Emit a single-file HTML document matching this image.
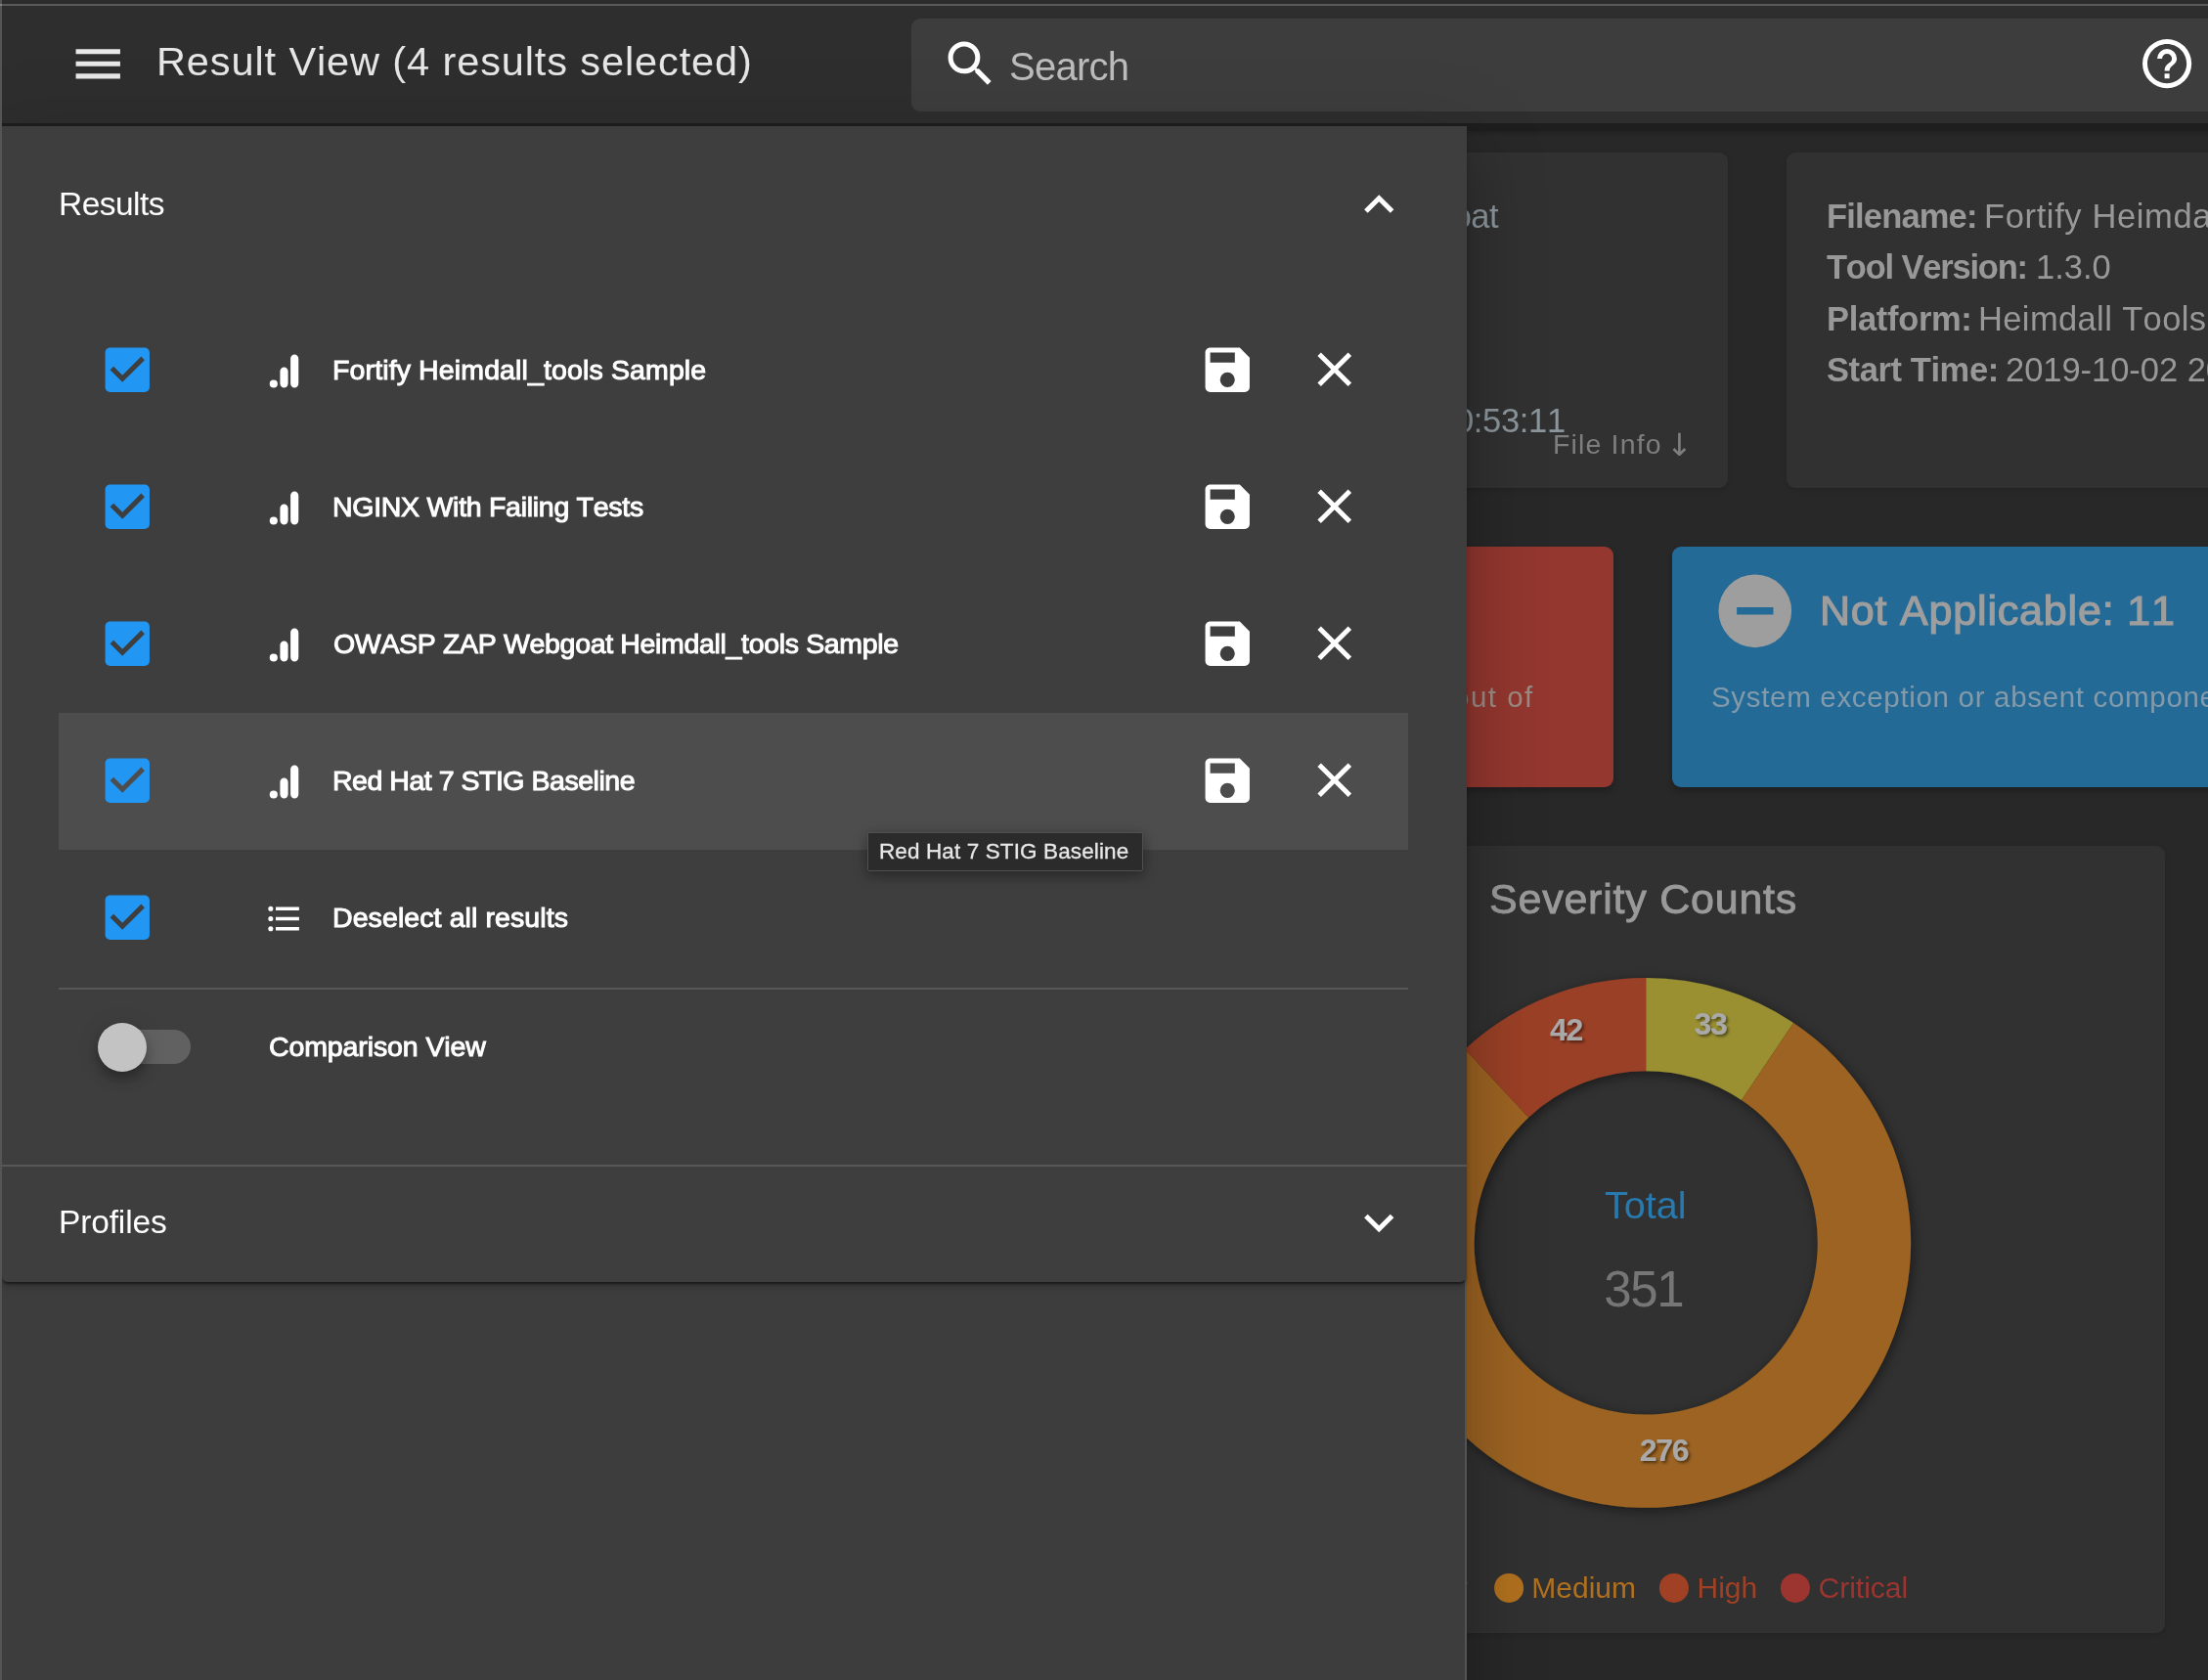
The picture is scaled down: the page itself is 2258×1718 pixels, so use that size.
<!DOCTYPE html>
<html lang="en"><head><meta charset="utf-8"><title>Result View</title>
<style>
html,body{margin:0;padding:0;background:#282828;}
body{width:2258px;height:1718px;overflow:hidden;position:relative;font-family:"Liberation Sans",sans-serif;}
.a{position:absolute;}
.t{position:absolute;white-space:nowrap;line-height:1;font-kerning:none;will-change:transform;}
.ic{position:absolute;display:block;}
</style></head>
<body>
<div class="a" style="left:1300px;top:156px;width:467px;height:343px;background:#313131;border-radius:9px;box-shadow:0 2px 5px rgba(0,0,0,.12);"></div>
<div class="a" style="left:1827px;top:156px;width:500px;height:343px;background:#313131;border-radius:9px;box-shadow:0 2px 5px rgba(0,0,0,.12);"></div>
<span class="t " style="top:203.80px;font-size:34.5px;color:#8b969c;left:1398.25px;letter-spacing:-0.6px;">Webgoat</span>
<span class="t " style="top:413.30px;font-size:34.5px;color:#8b969c;left:1469.47px;letter-spacing:-0.3px;">20:53:11</span>
<span class="t " style="top:439.67px;font-size:28.5px;color:#7e7e7e;left:1588.15px;letter-spacing:1.15px;">File Info</span>
<span class="t" style="left:1703.5px;top:438.7px;font-size:32px;color:#7e7e7e;font-family:'DejaVu Sans',sans-serif;">↓</span>
<span class="t " style="top:203.70px;font-size:34.5px;color:#989898;left:1867.55px;font-weight:700;letter-spacing:-0.822px;">Filename:</span>
<span class="t " style="top:203.70px;font-size:34.5px;color:#989898;left:2029.25px;letter-spacing:0.625px;">Fortify Heimdall_tools Sample</span>
<span class="t " style="top:256.40px;font-size:34.5px;color:#989898;left:1868.12px;font-weight:700;letter-spacing:-1.202px;">Tool Version:</span>
<span class="t " style="top:256.40px;font-size:34.5px;color:#989898;left:2082.07px;">1.3.0</span>
<span class="t " style="top:308.70px;font-size:34.5px;color:#989898;left:1867.55px;font-weight:700;letter-spacing:-0.325px;">Platform:</span>
<span class="t " style="top:308.70px;font-size:34.5px;color:#989898;left:2022.75px;letter-spacing:0.371px;">Heimdall Tools</span>
<span class="t " style="top:361.40px;font-size:34.5px;color:#989898;left:1867.62px;font-weight:700;letter-spacing:-0.405px;">Start Time:</span>
<span class="t " style="top:361.40px;font-size:34.5px;color:#989898;left:2051.07px;letter-spacing:-0.036px;">2019-10-02 20:53:11</span>
<div class="a" style="left:1300px;top:559px;width:350px;height:246px;background:#93372f;border-radius:9px;box-shadow:0 4px 6px rgba(0,0,0,.25);"></div>
<div class="a" style="left:1710px;top:559px;width:600px;height:246px;background:#246a96;border-radius:9px;box-shadow:0 4px 6px rgba(0,0,0,.25);"></div>
<span class="t " style="top:697.63px;font-size:29.5px;color:#9b8b85;left:1485.92px;letter-spacing:1.5px;">out of</span>
<svg class="ic" style="left:1750.20px;top:579.50px;" width="89.6" height="89.6" viewBox="0 0 24 24"><path fill="#9e9e9e" d="M17,13H7V11H17M12,2A10,10 0 0,0 2,12A10,10 0 0,0 12,22A10,10 0 0,0 22,12A10,10 0 0,0 12,2Z"/></svg>
<span class="t " style="top:602.80px;font-size:43px;color:#9e9e9e;left:1860.90px;letter-spacing:0.812px;-webkit-text-stroke:1.2px #9e9e9e;">Not Applicable: 11</span>
<span class="t " style="top:697.63px;font-size:29.5px;color:#839aab;left:1749.75px;letter-spacing:0.68px;">System exception or absent component</span>
<div class="a" style="left:1300px;top:865px;width:914px;height:805px;background:#313131;border-radius:9px;box-shadow:0 2px 5px rgba(0,0,0,.12);"></div>
<span class="t " style="top:898.20px;font-size:43px;color:#9a9a9a;left:1522.58px;letter-spacing:0.771px;-webkit-text-stroke:0.9px #9a9a9a;">Severity Counts</span>
<svg class="a" style="left:0;top:0;" width="2258" height="1718" viewBox="0 0 2258 1718">
<defs><filter id="ds" x="-20%" y="-20%" width="140%" height="140%"><feDropShadow dx="2" dy="3" stdDeviation="6" flood-color="#000" flood-opacity="0.45"/></filter><filter id="ts" x="-30%" y="-30%" width="160%" height="160%"><feDropShadow dx="2" dy="2" stdDeviation="1.5" flood-color="#000" flood-opacity="0.5"/></filter></defs>
<g filter="url(#ds)">
<path fill="#9a9033" d="M1683.20,1000.00 A270.9,270.9 0 0 1 1834.08,1045.91 L1781.00,1125.06 A175.6,175.6 0 0 0 1683.20,1095.30 Z"/>
<path fill="#9c6320" d="M1834.08,1045.91 A270.9,270.9 0 1 1 1498.18,1073.02 L1563.27,1142.64 A175.6,175.6 0 1 0 1781.00,1125.06 Z"/>
<path fill="#9a4026" d="M1498.18,1073.02 A270.9,270.9 0 0 1 1683.20,1000.00 L1683.20,1095.30 A175.6,175.6 0 0 0 1563.27,1142.64 Z"/>
</g>
<g font-family="Liberation Sans, sans-serif" font-weight="700" font-size="32" letter-spacing="-1.3" fill="#a9a9a9" text-anchor="middle" filter="url(#ts)"><text x="1601.4" y="1063.6">42</text><text x="1749" y="1057.6">33</text><text x="1701.6" y="1494.3">276</text></g>
<text font-family="Liberation Sans, sans-serif" font-size="39.5" fill="#2779ae" text-anchor="middle" x="1682.8" y="1246.1">Total</text>
<text font-family="Liberation Sans, sans-serif" font-size="51" letter-spacing="-1.4" fill="#767676" text-anchor="middle" x="1680.8" y="1336.3">351</text>
<circle cx="1432" cy="1623.9" r="15" fill="#9a9033"/>
<text font-family="Liberation Sans, sans-serif" font-size="30" fill="#9a9033" x="1445.5" y="1634">Low</text>
<circle cx="1543.1" cy="1623.9" r="15" fill="#b0701e"/>
<text font-family="Liberation Sans, sans-serif" font-size="30" fill="#b0701e" x="1566.3" y="1634">Medium</text>
<circle cx="1711.9" cy="1623.9" r="15" fill="#a04024"/>
<text font-family="Liberation Sans, sans-serif" font-size="30" fill="#a04024" x="1735.5" y="1634">High</text>
<circle cx="1835.9" cy="1623.9" r="15" fill="#9c3530"/>
<text font-family="Liberation Sans, sans-serif" font-size="30" fill="#9c3530" x="1859.5" y="1634">Critical</text>
</svg>
<div class="a" style="left:0;top:126px;width:2258px;height:8px;background:#1e1e1e;"></div>
<div class="a" style="left:0;top:134px;width:2258px;height:6px;background:linear-gradient(#212121,#282828);"></div>
<div class="a" style="left:0;top:0;width:2258px;height:126px;background:#2e2e2e;"></div>
<div class="a" style="left:932px;top:19px;width:1400px;height:95px;background:#3d3d3d;border-radius:9px;"></div>
<svg class="ic" style="left:69.70px;top:35.20px;" width="60.5" height="60.5" viewBox="0 0 24 24"><path fill="#e8e8e8" d="M3,6H21V8H3V6M3,11H21V13H3V11M3,16H21V18H3V16Z"/></svg>
<span class="t " style="top:42.27px;font-size:41.5px;color:#e6e6e6;left:159.82px;letter-spacing:0.892px;">Result View (4 results selected)</span>
<svg class="ic" style="left:962.00px;top:35.20px;" width="60.5" height="60.5" viewBox="0 0 24 24"><path fill="#ffffff" d="M9.5,3A6.5,6.5 0 0,1 16,9.5C16,11.11 15.41,12.59 14.44,13.73L14.71,14H15.5L20.5,19L19,20.5L14,15.5V14.71L13.73,14.44C12.59,15.41 11.11,16 9.5,16A6.5,6.5 0 0,1 3,9.5A6.5,6.5 0 0,1 9.5,3M9.5,5C7,5 5,7 5,9.5C5,12 7,14 9.5,14C12,14 14,12 14,9.5C14,7 12,5 9.5,5Z"/></svg>
<span class="t " style="top:48.34px;font-size:40px;color:#bcbcbc;left:1032.05px;letter-spacing:-0.74px;">Search</span>
<svg class="ic" style="left:2186.20px;top:35.20px;" width="60.2" height="60.2" viewBox="0 0 24 24"><path fill="#ffffff" d="M11,18H13V16H11V18M12,2A10,10 0 0,0 2,12A10,10 0 0,0 12,22A10,10 0 0,0 22,12A10,10 0 0,0 12,2M12,20C7.59,20 4,16.41 4,12C4,7.59 7.59,4 12,4C16.41,4 20,7.59 20,12C20,16.41 16.41,20 12,20M12,6A4,4 0 0,0 8,10H10A2,2 0 0,1 12,8A2,2 0 0,1 14,10C14,12 11,11.75 11,15H13C13,12.75 16,12.5 16,10A4,4 0 0,0 12,6Z"/></svg>
<div class="a" style="left:0;top:129px;width:1500px;height:1700px;background:#3d3d3d;box-shadow:0 20px 25px -12px rgba(0,0,0,.2),0 40px 60px 5px rgba(0,0,0,.14),0 15px 75px 12px rgba(0,0,0,.12);"></div>
<div class="a" style="left:1497.5px;top:129px;width:2.5px;height:1600px;background:#525456;"></div>
<div class="a" style="left:2px;top:129px;width:1498px;height:1182px;background:#3e3e3e;border-radius:0 0 7px 6px;box-shadow:0 3px 2px -1px rgba(0,0,0,.45),0 5px 6px rgba(0,0,0,.18);"></div>
<span class="t " style="top:191.64px;font-size:33.5px;color:#ffffff;left:59.67px;letter-spacing:-0.55px;">Results</span>
<svg class="ic" style="left:1379.75px;top:179.20px;" width="60.5" height="60.5" viewBox="0 0 24 24"><path fill="#ffffff" d="M7.41,15.41L12,10.83L16.59,15.41L18,14L12,8L6,14L7.41,15.41Z"/></svg>
<div class="a" style="left:60px;top:729px;width:1380px;height:140px;background:#4d4d4d;"></div>
<svg class="ic" style="left:99.80px;top:348.10px;" width="60.5" height="60.5" viewBox="0 0 24 24"><path fill="#2196f3" d="M10,17L5,12L6.41,10.58L10,14.17L17.59,6.58L19,8M19,3H5C3.89,3 3,3.89 3,5V19A2,2 0 0,0 5,21H19A2,2 0 0,0 21,19V5C21,3.89 20.1,3 19,3Z"/></svg>
<svg class="ic" style="left:269.75px;top:358.50px;" width="41" height="41" viewBox="0 0 24 24"><path fill="#ffffff" d="M15.86,4.39V19.39C15.86,21.06 17,22 18.25,22C19.39,22 20.64,21.21 20.64,19.39V4.5C20.64,2.96 19.5,2 18.25,2C17,2 15.86,3.06 15.86,4.39M9.61,12V19.39C9.61,21.07 10.77,22 12,22C13.14,22 14.39,21.21 14.39,19.39V12.11C14.39,10.57 13.25,9.61 12,9.61C10.75,9.61 9.61,10.67 9.61,12M5.75,17.23A2.39,2.39 0 0,1 8.14,19.61A2.39,2.39 0 0,1 5.75,22A2.39,2.39 0 0,1 3.36,19.61A2.39,2.39 0 0,1 5.75,17.23Z"/></svg>
<span class="t " style="top:363.87px;font-size:28.5px;color:#ffffff;left:339.85px;letter-spacing:0.129px;-webkit-text-stroke:1.0px #ffffff;">Fortify Heimdall_tools Sample</span>
<svg class="ic" style="left:1224.80px;top:348.10px;" width="60.5" height="60.5" viewBox="0 0 24 24"><path fill="#ffffff" d="M15,9H5V5H15M12,19A3,3 0 0,1 9,16A3,3 0 0,1 12,13A3,3 0 0,1 15,16A3,3 0 0,1 12,19M17,3H5C3.89,3 3,3.9 3,5V19A2,2 0 0,0 5,21H19A2,2 0 0,0 21,19V7L17,3Z"/></svg>
<svg class="ic" style="left:1335.20px;top:348.40px;" width="59.5" height="59.5" viewBox="0 0 24 24"><path fill="#ffffff" d="M19,6.41L17.59,5L12,10.59L6.41,5L5,6.41L10.59,12L5,17.59L6.41,19L12,13.41L17.59,19L19,17.59L13.41,12L19,6.41Z"/></svg>
<svg class="ic" style="left:99.80px;top:488.10px;" width="60.5" height="60.5" viewBox="0 0 24 24"><path fill="#2196f3" d="M10,17L5,12L6.41,10.58L10,14.17L17.59,6.58L19,8M19,3H5C3.89,3 3,3.89 3,5V19A2,2 0 0,0 5,21H19A2,2 0 0,0 21,19V5C21,3.89 20.1,3 19,3Z"/></svg>
<svg class="ic" style="left:269.75px;top:498.50px;" width="41" height="41" viewBox="0 0 24 24"><path fill="#ffffff" d="M15.86,4.39V19.39C15.86,21.06 17,22 18.25,22C19.39,22 20.64,21.21 20.64,19.39V4.5C20.64,2.96 19.5,2 18.25,2C17,2 15.86,3.06 15.86,4.39M9.61,12V19.39C9.61,21.07 10.77,22 12,22C13.14,22 14.39,21.21 14.39,19.39V12.11C14.39,10.57 13.25,9.61 12,9.61C10.75,9.61 9.61,10.67 9.61,12M5.75,17.23A2.39,2.39 0 0,1 8.14,19.61A2.39,2.39 0 0,1 5.75,22A2.39,2.39 0 0,1 3.36,19.61A2.39,2.39 0 0,1 5.75,17.23Z"/></svg>
<span class="t " style="top:503.87px;font-size:28.5px;color:#ffffff;left:339.85px;letter-spacing:-0.282px;-webkit-text-stroke:1.0px #ffffff;">NGINX With Failing Tests</span>
<svg class="ic" style="left:1224.80px;top:488.10px;" width="60.5" height="60.5" viewBox="0 0 24 24"><path fill="#ffffff" d="M15,9H5V5H15M12,19A3,3 0 0,1 9,16A3,3 0 0,1 12,13A3,3 0 0,1 15,16A3,3 0 0,1 12,19M17,3H5C3.89,3 3,3.9 3,5V19A2,2 0 0,0 5,21H19A2,2 0 0,0 21,19V7L17,3Z"/></svg>
<svg class="ic" style="left:1335.20px;top:488.40px;" width="59.5" height="59.5" viewBox="0 0 24 24"><path fill="#ffffff" d="M19,6.41L17.59,5L12,10.59L6.41,5L5,6.41L10.59,12L5,17.59L6.41,19L12,13.41L17.59,19L19,17.59L13.41,12L19,6.41Z"/></svg>
<svg class="ic" style="left:99.80px;top:628.10px;" width="60.5" height="60.5" viewBox="0 0 24 24"><path fill="#2196f3" d="M10,17L5,12L6.41,10.58L10,14.17L17.59,6.58L19,8M19,3H5C3.89,3 3,3.89 3,5V19A2,2 0 0,0 5,21H19A2,2 0 0,0 21,19V5C21,3.89 20.1,3 19,3Z"/></svg>
<svg class="ic" style="left:269.75px;top:638.50px;" width="41" height="41" viewBox="0 0 24 24"><path fill="#ffffff" d="M15.86,4.39V19.39C15.86,21.06 17,22 18.25,22C19.39,22 20.64,21.21 20.64,19.39V4.5C20.64,2.96 19.5,2 18.25,2C17,2 15.86,3.06 15.86,4.39M9.61,12V19.39C9.61,21.07 10.77,22 12,22C13.14,22 14.39,21.21 14.39,19.39V12.11C14.39,10.57 13.25,9.61 12,9.61C10.75,9.61 9.61,10.67 9.61,12M5.75,17.23A2.39,2.39 0 0,1 8.14,19.61A2.39,2.39 0 0,1 5.75,22A2.39,2.39 0 0,1 3.36,19.61A2.39,2.39 0 0,1 5.75,17.23Z"/></svg>
<span class="t " style="top:643.87px;font-size:28.5px;color:#ffffff;left:340.85px;letter-spacing:-0.334px;-webkit-text-stroke:1.0px #ffffff;">OWASP ZAP Webgoat Heimdall_tools Sample</span>
<svg class="ic" style="left:1224.80px;top:628.10px;" width="60.5" height="60.5" viewBox="0 0 24 24"><path fill="#ffffff" d="M15,9H5V5H15M12,19A3,3 0 0,1 9,16A3,3 0 0,1 12,13A3,3 0 0,1 15,16A3,3 0 0,1 12,19M17,3H5C3.89,3 3,3.9 3,5V19A2,2 0 0,0 5,21H19A2,2 0 0,0 21,19V7L17,3Z"/></svg>
<svg class="ic" style="left:1335.20px;top:628.40px;" width="59.5" height="59.5" viewBox="0 0 24 24"><path fill="#ffffff" d="M19,6.41L17.59,5L12,10.59L6.41,5L5,6.41L10.59,12L5,17.59L6.41,19L12,13.41L17.59,19L19,17.59L13.41,12L19,6.41Z"/></svg>
<svg class="ic" style="left:99.80px;top:768.10px;" width="60.5" height="60.5" viewBox="0 0 24 24"><path fill="#2196f3" d="M10,17L5,12L6.41,10.58L10,14.17L17.59,6.58L19,8M19,3H5C3.89,3 3,3.89 3,5V19A2,2 0 0,0 5,21H19A2,2 0 0,0 21,19V5C21,3.89 20.1,3 19,3Z"/></svg>
<svg class="ic" style="left:269.75px;top:778.50px;" width="41" height="41" viewBox="0 0 24 24"><path fill="#ffffff" d="M15.86,4.39V19.39C15.86,21.06 17,22 18.25,22C19.39,22 20.64,21.21 20.64,19.39V4.5C20.64,2.96 19.5,2 18.25,2C17,2 15.86,3.06 15.86,4.39M9.61,12V19.39C9.61,21.07 10.77,22 12,22C13.14,22 14.39,21.21 14.39,19.39V12.11C14.39,10.57 13.25,9.61 12,9.61C10.75,9.61 9.61,10.67 9.61,12M5.75,17.23A2.39,2.39 0 0,1 8.14,19.61A2.39,2.39 0 0,1 5.75,22A2.39,2.39 0 0,1 3.36,19.61A2.39,2.39 0 0,1 5.75,17.23Z"/></svg>
<span class="t " style="top:783.87px;font-size:28.5px;color:#ffffff;left:339.85px;letter-spacing:-0.477px;-webkit-text-stroke:1.0px #ffffff;">Red Hat 7 STIG Baseline</span>
<svg class="ic" style="left:1224.80px;top:768.10px;" width="60.5" height="60.5" viewBox="0 0 24 24"><path fill="#ffffff" d="M15,9H5V5H15M12,19A3,3 0 0,1 9,16A3,3 0 0,1 12,13A3,3 0 0,1 15,16A3,3 0 0,1 12,19M17,3H5C3.89,3 3,3.9 3,5V19A2,2 0 0,0 5,21H19A2,2 0 0,0 21,19V7L17,3Z"/></svg>
<svg class="ic" style="left:1335.20px;top:768.40px;" width="59.5" height="59.5" viewBox="0 0 24 24"><path fill="#ffffff" d="M19,6.41L17.59,5L12,10.59L6.41,5L5,6.41L10.59,12L5,17.59L6.41,19L12,13.41L17.59,19L19,17.59L13.41,12L19,6.41Z"/></svg>
<svg class="ic" style="left:99.80px;top:908.10px;" width="60.5" height="60.5" viewBox="0 0 24 24"><path fill="#2196f3" d="M10,17L5,12L6.41,10.58L10,14.17L17.59,6.58L19,8M19,3H5C3.89,3 3,3.89 3,5V19A2,2 0 0,0 5,21H19A2,2 0 0,0 21,19V5C21,3.89 20.1,3 19,3Z"/></svg>
<svg class="ic" style="left:269.75px;top:918.50px;" width="41" height="41" viewBox="0 0 24 24"><path fill="#ffffff" d="M7,5H21V7H7V5M7,13V11H21V13H7M4,4.5A1.5,1.5 0 0,1 5.5,6A1.5,1.5 0 0,1 4,7.5A1.5,1.5 0 0,1 2.5,6A1.5,1.5 0 0,1 4,4.5M4,10.5A1.5,1.5 0 0,1 5.5,12A1.5,1.5 0 0,1 4,13.5A1.5,1.5 0 0,1 2.5,12A1.5,1.5 0 0,1 4,10.5M7,19V17H21V19H7M4,16.5A1.5,1.5 0 0,1 5.5,18A1.5,1.5 0 0,1 4,19.5A1.5,1.5 0 0,1 2.5,18A1.5,1.5 0 0,1 4,16.5Z"/></svg>
<span class="t " style="top:923.87px;font-size:28.5px;color:#ffffff;left:339.85px;letter-spacing:0.093px;-webkit-text-stroke:1.0px #ffffff;">Deselect all results</span>
<div class="a" style="left:60px;top:1009.5px;width:1380px;height:2px;background:#575757;"></div>
<div class="a" style="left:105px;top:1053px;width:90px;height:35px;border-radius:18px;background:#616161;"></div>
<div class="a" style="left:100px;top:1045.8px;width:50px;height:50.2px;border-radius:50%;background:#c3c3c3;box-shadow:0 5px 10px -2px rgba(0,0,0,.2),0 10px 12px rgba(0,0,0,.14),0 3px 25px rgba(0,0,0,.12);"></div>
<span class="t " style="top:1056.07px;font-size:28.5px;color:#ffffff;left:275.43px;letter-spacing:-0.105px;-webkit-text-stroke:1.0px #ffffff;">Comparison View</span>
<div class="a" style="left:2px;top:1191px;width:1498px;height:2px;background:#575757;"></div>
<span class="t " style="top:1233.24px;font-size:33.5px;color:#ffffff;left:59.98px;letter-spacing:-0.143px;">Profiles</span>
<svg class="ic" style="left:1379.75px;top:1219.75px;" width="60.5" height="60.5" viewBox="0 0 24 24"><path fill="#ffffff" d="M7.41,8.58L12,13.17L16.59,8.58L18,10L12,16L6,10L7.41,8.58Z"/></svg>
<div class="a" style="left:887px;top:851px;width:279.5px;height:37.5px;background:#2b2b2b;border:1px solid #505050;border-radius:2px;box-shadow:0 4px 14px rgba(0,0,0,.4);"></div>
<span class="t " style="top:859.55px;font-size:22.5px;color:#e8e8e8;left:899.10px;letter-spacing:0.115px;-webkit-text-stroke:0.3px #e8e8e8;">Red Hat 7 STIG Baseline</span>
<div class="a" style="left:0;top:0;width:2258px;height:4px;background:#2c2c2c;"></div>
<div class="a" style="left:0;top:4px;width:2258px;height:2px;background:#5a5a5a;"></div>
<div class="a" style="left:0;top:0;width:2px;height:1718px;background:#555555;"></div>
<div class="a" style="left:0;top:4px;width:2px;height:2px;background:#858282;"></div>
</body></html>
